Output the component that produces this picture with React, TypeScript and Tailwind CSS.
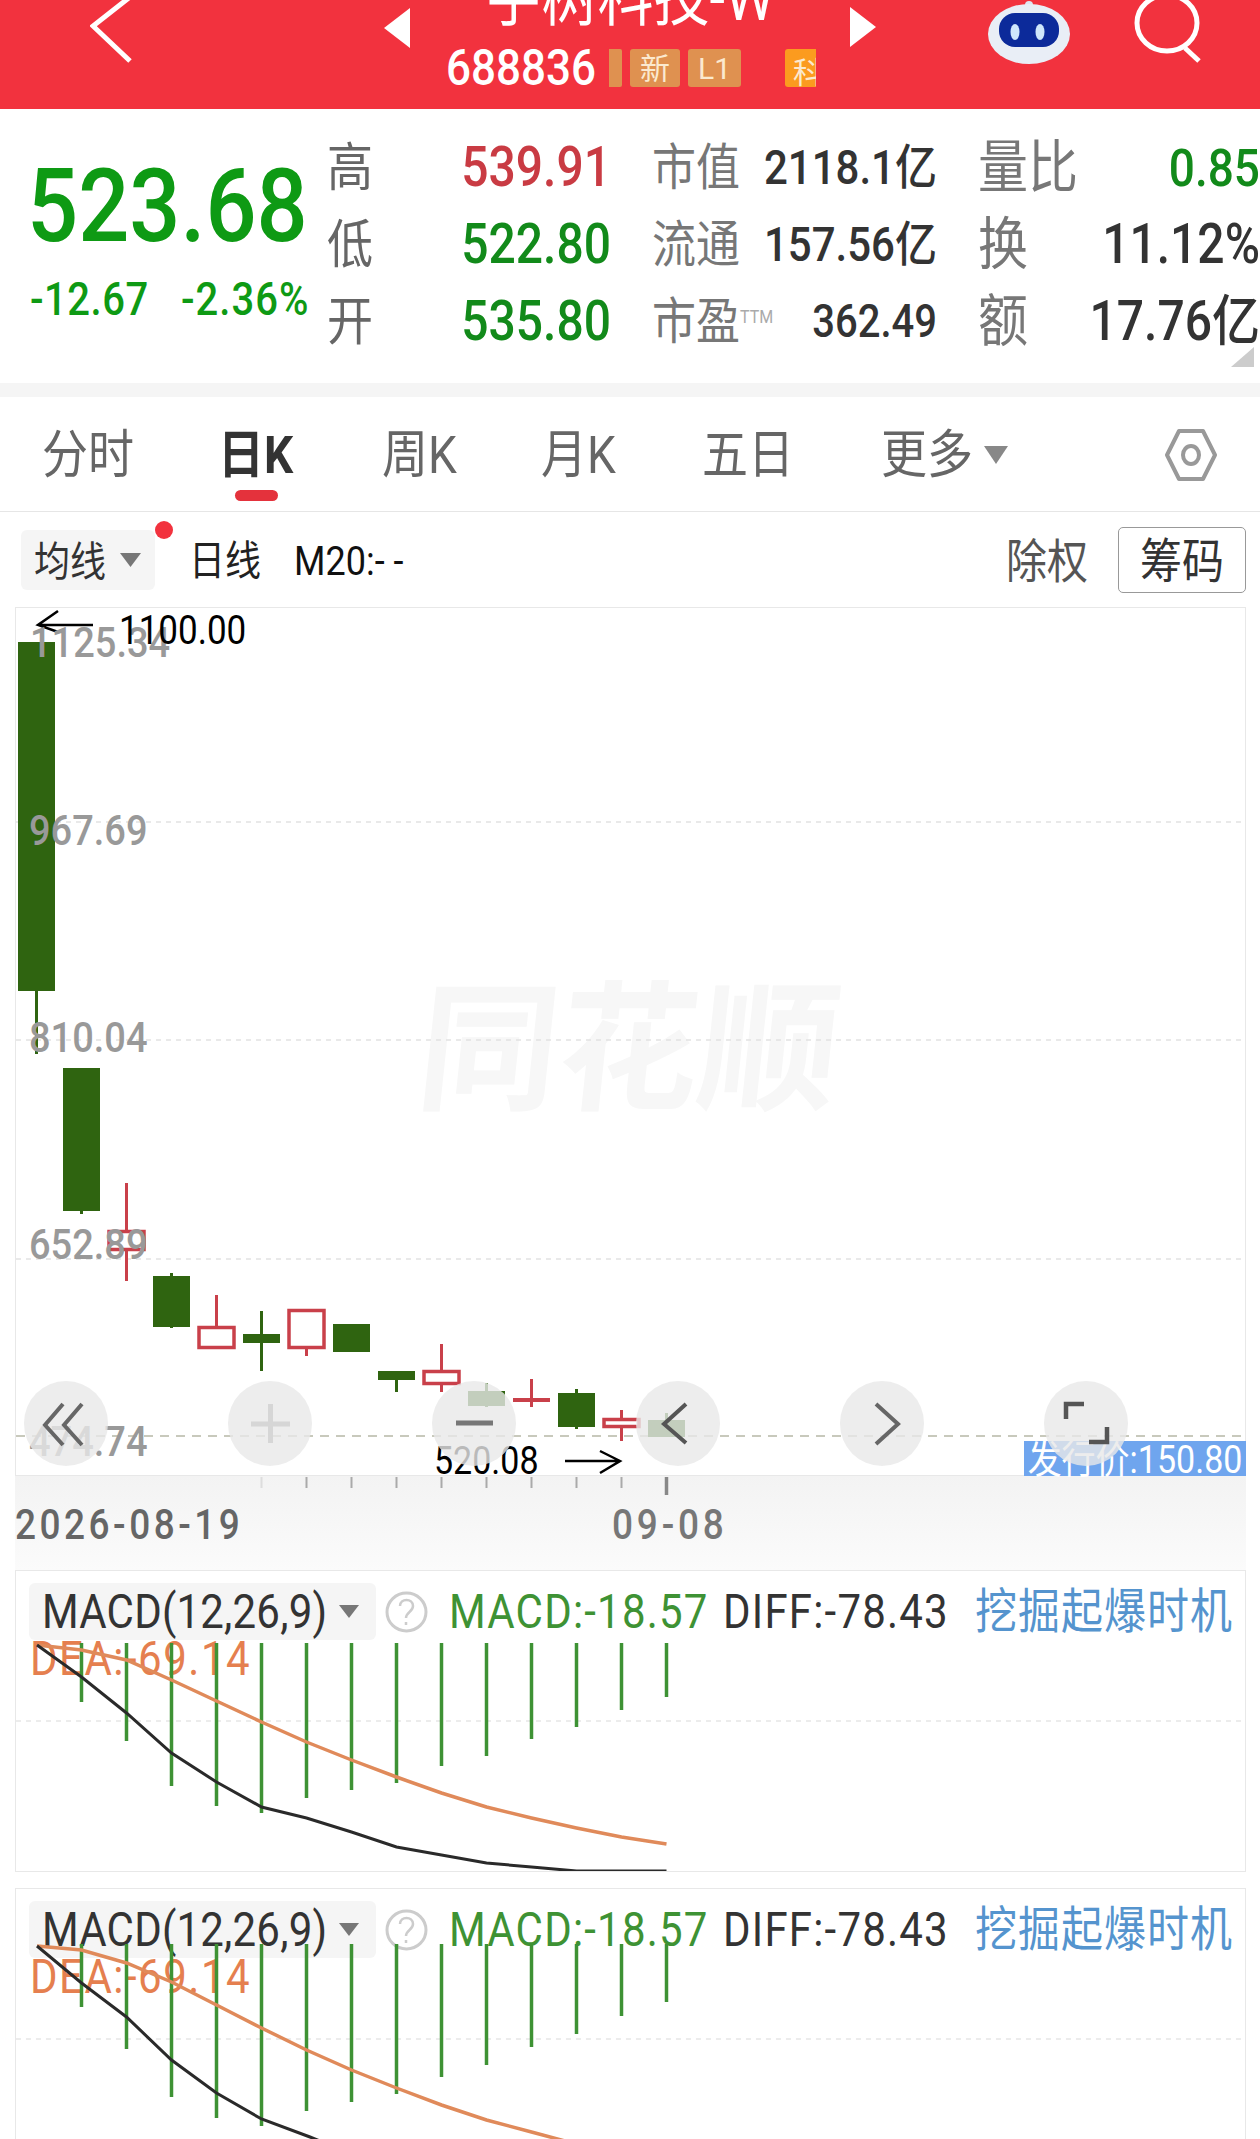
import { ReactNode } from "react";
import clsx from "clsx";

const GREEN = "#2F6410";
const RED = "#C9404A";

// text in the shot is stretched vertically, so every label gets a small scale-y
const T = ({ className, children }: { className?: string; children: ReactNode }) => (
  <span className={clsx("inline-block scale-y-[1.14] leading-none whitespace-nowrap", className)}>{children}</span>
);

const Header = () => (
  <header className="flex h-[109px] overflow-hidden bg-[#F2323E] text-white">
    <div className="w-[384px] pl-[90px]">
      <svg width="44" height="64" viewBox="0 0 44 64" fill="none" stroke="#fff" strokeWidth="5">
        <path d="M40 -3 L3 26 L40 61" />
      </svg>
    </div>
    <svg className="mt-[8px]" width="26" height="40" viewBox="0 0 26 40" fill="#fff">
      <path d="M26 0 L0 20 L26 40 Z" />
    </svg>
    <div className="flex w-[440px] flex-col">
      <div className="-mt-[30px] h-[56px] text-center">
        <T className="text-[56px]">宇树科技-W</T>
      </div>
      <div className="mt-[23px] flex h-[38px] items-center pl-[36px]">
        <T className="text-[44px] font-medium">688836</T>
        <div className="ml-[13px] flex h-[38px] w-[207px] gap-[8px] overflow-hidden text-[#FBE9CF]">
          <div className="w-[13px] shrink-0 rounded-r-[2px] bg-[#DF9150]" />
          <div className="flex w-[50px] shrink-0 items-center justify-center rounded-[3px] bg-[#DF9150] text-[30px]">新</div>
          <div className="flex w-[53px] shrink-0 items-center justify-center rounded-[3px] bg-[#DF9150] text-[30px]">L1</div>
          <div className="ml-[36px] w-[31px] shrink-0 overflow-hidden rounded-l-[3px] bg-[#FB9B1F] pl-[8px] pt-[1px] text-[30px]">科</div>
        </div>
      </div>
    </div>
    <svg className="mt-[7px]" width="26" height="40" viewBox="0 0 26 40" fill="#fff">
      <path d="M0 0 L26 20 L0 40 Z" />
    </svg>
    <svg className="ml-[111px] mt-[1px]" width="84" height="64" viewBox="0 0 84 64">
      <circle cx="42" cy="4" r="4" fill="#DDE6F2" />
      <ellipse cx="42" cy="33" rx="41" ry="30" fill="#E9EEF6" />
      <rect x="12" y="12" width="60" height="34" rx="16" fill="#0C2A9A" />
      <ellipse cx="28" cy="31" rx="4.5" ry="8" fill="#CFE6FB" />
      <ellipse cx="53" cy="31" rx="4.5" ry="8" fill="#CFE6FB" />
    </svg>
    <svg className="ml-[62px]" width="72" height="64" viewBox="0 0 72 64" fill="none" stroke="#fff" strokeWidth="5">
      <ellipse cx="34" cy="23" rx="30" ry="28" />
      <path d="M52 48 L66 61" />
    </svg>
  </header>
);

type Stat = { label: ReactNode; labelCls: string; value: string; valueCls: string };

const stats: Stat[] = [
  { label: "高", labelCls: "text-[46px] text-[#666]", value: "539.91", valueCls: "text-[48px] font-medium text-[#C93B43]" },
  { label: "市值", labelCls: "text-[44px] text-[#777]", value: "2118.1亿", valueCls: "text-[42px] font-medium text-[#333]" },
  { label: "量比", labelCls: "text-[50px] text-[#777]", value: "0.85", valueCls: "text-[46px] font-medium text-[#128A1A]" },
  { label: "低", labelCls: "text-[46px] text-[#666]", value: "522.80", valueCls: "text-[48px] font-medium text-[#128A1A]" },
  { label: "流通", labelCls: "text-[44px] text-[#777]", value: "157.56亿", valueCls: "text-[42px] font-medium text-[#333]" },
  { label: "换", labelCls: "text-[50px] text-[#777]", value: "11.12%", valueCls: "text-[48px] font-medium text-[#333]" },
  { label: "开", labelCls: "text-[46px] text-[#666]", value: "535.80", valueCls: "text-[48px] font-medium text-[#128A1A]" },
  {
    label: (
      <>
        市盈<span className="relative -top-[14px] text-[16px] text-[#AAA]">TTM</span>
      </>
    ),
    labelCls: "text-[44px] text-[#777]",
    value: "362.49",
    valueCls: "text-[40px] font-medium text-[#333]",
  },
  { label: "额", labelCls: "text-[50px] text-[#777]", value: "17.76亿", valueCls: "text-[48px] font-medium text-[#333]" },
];

const Quote = () => (
  <section className="relative flex h-[274px] bg-white">
    <div className="w-[330px] shrink-0 pl-[27px] pt-[53px] text-[#0E9A14]">
      <T className="block h-[89px] text-[90px] font-medium">523.68</T>
      <div className="mt-[29px] flex pl-[3px] text-[40px]">
        <T className="w-[151px] font-medium tracking-[0.5px]">-12.67</T>
        <T className="font-medium tracking-[1px]">-2.36%</T>
      </div>
    </div>
    <div className="grid h-[251px] grid-cols-[278px_279px_279px] gap-x-[47px] pt-[20px] [grid-auto-rows:77px]">
      {stats.map((s, i) => (
        <div key={i} className={clsx("flex items-center justify-between", i % 3 === 2 ? "-ml-[3px]" : "-mx-[3px]")}>
          <T className={s.labelCls}>{s.label}</T>
          <T className={s.valueCls}>{s.value}</T>
        </div>
      ))}
    </div>
    <svg className="absolute bottom-[16px] right-[6px]" width="23" height="20" viewBox="0 0 23 20" fill="#CCC">
      <path d="M23 0 V20 H0 Z" />
    </svg>
  </section>
);

const Tabs = () => (
  <nav className="grid h-[115px] grid-cols-[179px_161px_159px_161px_179px_284px_1fr] items-center border-b border-[#E6E6E6] pl-[42px] pt-[2px] text-[46px] text-[#666]">
    <T>分时</T>
    <div className="relative">
      <T className="-ml-[3px] font-bold text-[#333]">日K</T>
      <div className="absolute left-[14px] top-[69px] h-[11px] w-[43px] rounded-full bg-[#E4323C]" />
    </div>
    <T>周K</T>
    <T>月K</T>
    <T>五日</T>
    <div className="flex items-center">
      <T>更多</T>
      <svg className="ml-[11px]" width="24" height="18" viewBox="0 0 24 18" fill="#888">
        <path d="M0 0 H24 L12 18 Z" />
      </svg>
    </div>
    <svg width="52" height="54" viewBox="0 0 52 54" fill="none" stroke="#999" strokeWidth="4">
      <path d="M14 3 H38 L50 27 L38 51 H14 L2 27 Z" strokeLinejoin="round" />
      <ellipse cx="26" cy="27" rx="8" ry="9" />
    </svg>
  </nav>
);

const MaRow = () => (
  <div className="flex h-[95px] items-center pl-[21px] pr-[14px]">
    <div className="relative flex h-[60px] w-[134px] items-center rounded-[6px] bg-[#F5F5F5] pl-[13px]">
      <T className="mt-[4px] text-[36px] text-[#333]">均线</T>
      <svg className="ml-[14px]" width="21" height="14" viewBox="0 0 21 14" fill="#777">
        <path d="M0 0 H21 L10.5 14 Z" />
      </svg>
      <div className="absolute -right-[18px] -top-[9px] h-[18px] w-[18px] rounded-full bg-[#F2323E]" />
    </div>
    <T className="ml-[34px] mt-[3px] text-[36px] text-[#222]">日线</T>
    <T className="ml-[33px] mt-[3px] text-[36px] text-[#111]">
      M20:<span className="tracking-[9px]">--</span>
    </T>
    <T className="ml-auto mt-[6px] text-[41px] text-[#555]">除权</T>
    <div className="ml-[30px] flex h-[66px] w-[128px] items-center justify-center rounded-[5px] border border-[#999] pt-[5px]">
      <T className="text-[42px] text-[#333]">筹码</T>
    </div>
  </div>
);

type Candle = { x: number; top: number; bottom: number; bodyTop: number; bodyBottom: number; up?: boolean; solid?: boolean };

const candles: Candle[] = [
  { x: 36.5, top: 642, bottom: 1054, bodyTop: 642, bodyBottom: 991 },
  { x: 81.5, top: 1068, bottom: 1214, bodyTop: 1068, bodyBottom: 1211 },
  { x: 126.5, top: 1183, bottom: 1281, bodyTop: 1230, bodyBottom: 1251, up: true },
  { x: 171.5, top: 1273, bottom: 1328, bodyTop: 1276, bodyBottom: 1327 },
  { x: 216.5, top: 1295, bottom: 1349, bodyTop: 1326, bodyBottom: 1349, up: true },
  { x: 261.5, top: 1311, bottom: 1371, bodyTop: 1334, bodyBottom: 1343 },
  { x: 306.5, top: 1309, bottom: 1356, bodyTop: 1309, bodyBottom: 1349, up: true },
  { x: 351.5, top: 1324, bottom: 1352, bodyTop: 1324, bodyBottom: 1352 },
  { x: 396.5, top: 1371, bottom: 1392, bodyTop: 1371, bodyBottom: 1380 },
  { x: 441.5, top: 1344, bottom: 1392, bodyTop: 1370, bodyBottom: 1385, up: true },
  { x: 486.5, top: 1383, bottom: 1407, bodyTop: 1391, bodyBottom: 1406 },
  { x: 531.5, top: 1379, bottom: 1407, bodyTop: 1398, bodyBottom: 1402, up: true, solid: true },
  { x: 576.5, top: 1389, bottom: 1429, bodyTop: 1393, bodyBottom: 1427 },
  { x: 621.5, top: 1410, bottom: 1441, bodyTop: 1418, bodyBottom: 1428, up: true },
  { x: 666.5, top: 1413, bottom: 1437, bodyTop: 1420, bodyBottom: 1437 },
];

const axisLabels = [
  { text: "1125.34", cls: "left-[14px] top-[15px]" },
  { text: "967.69", cls: "left-[13px] top-[203px]" },
  { text: "810.04", cls: "left-[13px] top-[410px]" },
  { text: "652.89", cls: "left-[13px] top-[617px]" },
  { text: "474.74", cls: "left-[13px] top-[814px]" },
];

const buttons = [
  { cls: "left-[8px]", icon: <path d="M39 23 L21 44 L39 64 M58 23 L40 44 L58 64" stroke="#666" strokeWidth="4" /> },
  { cls: "left-[212px]", icon: <path d="M23 43 H62 M42.5 23 V62" stroke="#D6D6D6" strokeWidth="5" /> },
  { cls: "left-[416px]", icon: <path d="M24 42 H61" stroke="#777" strokeWidth="5" /> },
  { cls: "left-[620px]", icon: <path d="M50 23 L28 43 L50 62" stroke="#555" strokeWidth="4" /> },
  { cls: "left-[824px]", icon: <path d="M36 23 L58 43 L36 63" stroke="#666" strokeWidth="4" /> },
  { cls: "left-[1028px]", icon: <path d="M22 38 V23 H40 M63 46 V61 H45" stroke="#555" strokeWidth="4.5" /> },
];

const KChart = () => (
  <div className="relative ml-[15px] h-[869px] w-[1231px] border border-[#E8E8E8]">
    <span className="absolute left-[403px] top-[373px] inline-block -skew-x-6 whitespace-nowrap text-[140px] font-bold leading-none text-[#F7F7F7]">同花顺</span>
    <svg className="absolute inset-0" width="1229" height="867" viewBox="16 608 1229 867" fill="none">
      {[822, 1040, 1259].map((y) => (
        <path key={y} d={`M16 ${y} H1245`} stroke="#E2E2E2" strokeWidth="1.5" strokeDasharray="5 5" />
      ))}
      <path d="M16 1436 H1245" stroke="#B6B8A6" strokeWidth="1.5" strokeDasharray="9 7" />
      {candles.map((c) => {
        const color = c.up ? RED : GREEN;
        return (
          <g key={c.x}>
            <path d={`M${c.x} ${c.top} V${c.bottom}`} stroke={color} strokeWidth="3" />
            {c.up && !c.solid ? (
              <rect x={c.x - 17.5} y={c.bodyTop + 1.5} width="35" height={c.bodyBottom - c.bodyTop - 3} fill="#fff" stroke={color} strokeWidth="3.5" />
            ) : (
              <rect x={c.x - 18.5} y={c.bodyTop} width="37" height={c.bodyBottom - c.bodyTop} fill={color} />
            )}
          </g>
        );
      })}
      <path d="M93 625 H38 M58 611 L38 625 L58 632" stroke="#000" strokeWidth="2.5" />
      <path d="M565 1461 H620 M600 1451 L620 1461 L600 1473" stroke="#000" strokeWidth="2.5" />
    </svg>
    {axisLabels.map((l) => (
      <T key={l.text} className={clsx("absolute text-[38px] font-medium text-[#999]", l.cls)}>
        {l.text}
      </T>
    ))}
    <T className="absolute left-[103px] top-[5px] text-[35px] text-black">1100.00</T>
    <T className="absolute left-[418px] top-[835px] text-[34px] text-black">520.08</T>
    <div className="absolute -bottom-px -right-px flex h-[35px] w-[222px] items-center justify-center bg-[#6FA5EE] text-[34px] text-white">
      <T>发行价:150.80</T>
    </div>
    {buttons.map((b, i) => (
      <div key={i} className={clsx("absolute top-[773px] h-[85px] w-[84px] rounded-full bg-[#E9E9E9]/80", b.cls)}>
        <svg width="84" height="85" viewBox="0 0 84 85" fill="none">
          {b.icon}
        </svg>
      </div>
    ))}
  </div>
);

const ticks = [261.5, 306.5, 351.5, 396.5, 441.5, 486.5, 531.5, 576.5, 621.5];

const Axis = () => (
  <div className="ml-[15px] h-[94px] w-[1231px] bg-linear-to-b from-[#F3F3F3] to-[#FBFBFB]">
    <svg className="block" width="1231" height="20" viewBox="15 1476 1231 20" fill="none">
      {ticks.map((x, i) => (
        <path key={x} d={`M${x} 1477 V1488`} stroke={i === 0 ? "#DDD" : "#AAA"} strokeWidth="2" />
      ))}
      <path d="M666.5 1477 V1495" stroke="#888" strokeWidth="3.5" />
    </svg>
    <div className="mt-[10px] flex text-[37px]">
      <T className="w-[597px] font-medium tracking-[3.5px] text-[#666]">2026-08-19</T>
      <T className="font-medium tracking-[3.8px] text-[#777]">09-08</T>
    </div>
  </div>
);

type MacdProps = {
  top: number;
  height: number;
  className?: string;
  dash: number;
  barTop: number;
  bars: number[];
  dea: string;
  diff: string;
};

const barXs = [81.5, 126.5, 171.5, 216.5, 261.5, 306.5, 351.5, 396.5, 441.5, 486.5, 531.5, 576.5, 621.5, 666.5];

const MacdPanel = ({ top, height, className, dash, barTop, bars, dea, diff }: MacdProps) => (
  <div className={clsx("relative ml-[15px] w-[1231px] overflow-hidden border border-[#E8E8E8]", className)} style={{ height }}>
    <div className="flex items-center pl-[13px] pt-[12px]">
      <div className="flex h-[57px] w-[347px] items-center rounded-[6px] bg-[#F5F5F5] pl-[13px]">
        <T className="w-[297px] text-[42px] tracking-[0.2px] text-[#333]">MACD(12,26,9)</T>
        <svg width="20" height="13" viewBox="0 0 20 13" fill="#777">
          <path d="M0 0 H20 L10 13 Z" />
        </svg>
      </div>
      <svg className="ml-[9px]" width="43" height="42" viewBox="0 0 43 42" fill="none">
        <ellipse cx="21.5" cy="21" rx="19.5" ry="19" stroke="#CCC" strokeWidth="3" />
        <path d="M15 15 C15 7 28 7 28 15 C28 21 21 21 21 27 M21 31 V34" stroke="#CCC" strokeWidth="2.5" />
      </svg>
      <T className="ml-[21px] w-[274px] text-[42px] tracking-[1.2px] text-[#3E9234]">MACD:-18.57</T>
      <T className="w-[252px] text-[42px] tracking-[1.2px] text-[#333]">{diff}</T>
      <T className="text-[42px] tracking-[1px] text-[#5594CE]">挖掘起爆时机</T>
    </div>
    <T className="absolute left-[14px] top-[67px] text-[42px] tracking-[1.5px] text-[#E57F4F]">{dea}</T>
    <svg className="absolute inset-0" width="1229" height={height} viewBox={`16 ${top} 1229 ${height}`} fill="none">
      <path d={`M16 ${dash} H1245`} stroke="#E6E6E6" strokeWidth="1.5" strokeDasharray="5 5" />
      {barXs.map((x, i) => (
        <path key={x} d={`M${x} ${barTop} V${bars[i]}`} stroke="#3E9234" strokeWidth="3.5" />
      ))}
      <polyline points={top < 1800 ? deaLine1 : deaLine2} stroke="#E08A5A" strokeWidth="3.5" />
      <polyline points={top < 1800 ? diffLine1 : diffLine2} stroke="#2A2A2A" strokeWidth="3" />
    </svg>
  </div>
);

const deaLine1 = "37,1645 81.5,1650 126.5,1660 171.5,1680 216.5,1701 261.5,1722 306.5,1742 351.5,1760 396.5,1777 441.5,1793 486.5,1807 531.5,1818 576.5,1828 621.5,1837 666.5,1844";
const diffLine1 = "37,1645 81.5,1677 126.5,1713 171.5,1753 216.5,1782 261.5,1807 306.5,1818 351.5,1832 396.5,1847 441.5,1855 486.5,1863 531.5,1867 576.5,1871 621.5,1871 666.5,1871";
const deaLine2 = "37,1946 81.5,1950 126.5,1963 171.5,1982 216.5,2005 261.5,2028 306.5,2050 351.5,2070 396.5,2088 441.5,2105 486.5,2120 531.5,2132 565,2141";
const diffLine2 = "37,1946 81.5,1983 126.5,2017 171.5,2060 216.5,2093 261.5,2119 310,2137 330,2145";

const App = () => (
  <div className="h-[2139px] w-[1260px] overflow-hidden bg-white font-[Roboto,'Noto_Sans_CJK_SC',sans-serif]">
    <Header />
    <Quote />
    <div className="h-[14px] bg-[#F5F5F5]" />
    <Tabs />
    <MaRow />
    <KChart />
    <Axis />
    <MacdPanel
      top={1571}
      height={302}
      dash={1721}
      barTop={1643}
      bars={[1702, 1741, 1786, 1806, 1813, 1798, 1790, 1783, 1766, 1756, 1739, 1727, 1710, 1697]}
      dea="DEA:-69.14"
      diff="DIFF:-78.43"
    />
    <MacdPanel
      top={1889}
      height={260}
      className="mt-[16px]"
      dash={2039}
      barTop={1944}
      bars={[2007, 2049, 2097, 2118, 2126, 2111, 2102, 2094, 2077, 2065, 2047, 2034, 2016, 2002]}
      dea="DEA:-69.14"
      diff="DIFF:-78.43"
    />
  </div>
);

export default App;
